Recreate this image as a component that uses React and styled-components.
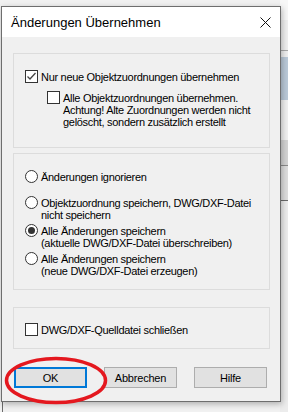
import React from 'react'
import styled, { createGlobalStyle } from 'styled-components'

const GlobalStyle = createGlobalStyle`
html, body {
  margin: 0;
  padding: 0;
}
body {
  width: 288px;
  height: 412px;
  overflow: hidden;
  font-family: "Liberation Sans", Arial, sans-serif;
}
`

const Page = styled.div`
position: relative;
width: 288px;
height: 412px;
overflow: hidden;
padding: 6px 0 0 1px;
box-sizing: border-box;
background:
  linear-gradient(to bottom,
    #f7f7f7 0, #f7f7f7 20px,
    #efefef 20px, #efefef 50px,
    #a8a8a8 50px, #a8a8a8 51px,
    #eeeeee 51px, #eeeeee 57px,
    #b9c8d7 57px, #b9c8d7 100px,
    #f0f0f0 100px, #f0f0f0 140px,
    #d3d3d3 140px, #d3d3d3 165px,
    #8a8a8a 165px, #8a8a8a 166px,
    #dddddd 166px, #dddddd 200px,
    #6a6a6a 200px, #6a6a6a 201px,
    #ececec 201px) right top / 8px 100% no-repeat,
  linear-gradient(to right, transparent 2px, #6b6b6b 2px, #6b6b6b 3px, transparent 3px) left bottom / 10px 12px no-repeat,
  #f1f1f1;
`

const Dialog = styled.div`
width: 280px;
height: 396px;
box-sizing: border-box;
border: 1px solid #6e6e6e;
background: #f0f0f0;
display: flex;
flex-direction: column;
box-shadow: 1px 2px 6px rgba(0, 0, 0, 0.28);
`

const TitleBar = styled.div`
height: 30px;
background: #ffffff;
display: flex;
align-items: center;
justify-content: space-between;
padding: 0 9px 0 9px;
flex: none;
`

const Title = styled.span`
font-family: "Liberation Sans", Arial, sans-serif;
font-size: 13px;
color: #000;
`

const Close = styled.svg`
width: 11px;
height: 11px;
margin-top: 1px;
`

const Body = styled.div`
padding: 16px 10px 0 11px;
display: flex;
flex-direction: column;
`

const Group = styled.div`
border: 1px solid #dcdcdc;
box-sizing: border-box;
height: ${p => p.$h}px;
margin-top: ${p => p.$mt || 0}px;
padding: ${p => p.$pt}px 0 0 11px;
display: flex;
flex-direction: column;
`

const Row = styled.label`
display: flex;
align-items: flex-start;
gap: 3px;
margin-top: ${p => p.$mt || 0}px;
margin-left: ${p => p.$indent || 0}px;
font-size: 11px;
line-height: 12px;
letter-spacing: -0.3px;
color: #000;
`

const Text = styled.span`
padding-top: 1px;
`

const Box = styled.span`
flex: none;
width: 13px;
height: 13px;
box-sizing: border-box;
border: 1px solid #333333;
background: #ffffff;
display: flex;
align-items: center;
justify-content: center;
`

const Circle = styled.span`
flex: none;
width: 13px;
height: 13px;
box-sizing: border-box;
border: 1px solid #333333;
border-radius: 50%;
background: #ffffff;
display: flex;
align-items: center;
justify-content: center;
&::after {
  content: "";
  display: ${p => (p.$on ? 'block' : 'none')};
  width: 7px;
  height: 7px;
  border-radius: 50%;
  background: #333333;
}
`

const Buttons = styled.div`
display: flex;
gap: 17px;
margin-top: 18px;
padding-left: 1px;
`

const Button = styled.button`
width: 73px;
height: 21px;
box-sizing: border-box;
padding: 0;
margin: 0;
background: #e1e1e1;
border: ${p => (p.$focus ? '2px solid #0078d7' : '1px solid #adadad')};
font-family: "Liberation Sans", Arial, sans-serif;
font-size: 11px;
letter-spacing: -0.2px;
color: #000;
`

const Ring = styled.svg`
position: absolute;
left: 4px;
top: 356px;
width: 104px;
height: 49px;
pointer-events: none;
`

const Check = ({ checked }) => (
  <Box>
    {checked && (
      <svg width="11" height="11" viewBox="0 0 11 11">
        <polyline points="1.5,5.5 4,8 9.5,2" fill="none" stroke="#444" strokeWidth="1.3" />
      </svg>
    )}
  </Box>
)

const Option = ({ radio, on, mt, indent, children }) => (
  <Row $mt={mt} $indent={indent}>
    {radio ? <Circle $on={on} /> : <Check checked={on} />}
    <Text>{children}</Text>
  </Row>
)

export default function App() {
  return (
    <>
      <GlobalStyle />
      <Page>
        <Dialog>
          <TitleBar>
            <Title>Änderungen Übernehmen</Title>
            <Close viewBox="0 0 11 11">
              <path d="M0.5 0.5 L10.5 10.5 M10.5 0.5 L0.5 10.5" stroke="#111" strokeWidth="1" fill="none" />
            </Close>
          </TitleBar>
          <Body>
            <Group $h={95} $pt={16}>
              <Option on>Nur neue Objektzuordnungen übernehmen</Option>
              <Option mt={8} indent={22}>
                Alle Objektzuordnungen übernehmen.<br />
                Achtung! Alte Zuordnungen werden nicht<br />
                gelöscht, sondern zusätzlich erstellt
              </Option>
            </Group>
            <Group $h={137} $mt={5} $pt={16}>
              <Option radio>Änderungen ignorieren</Option>
              <Option radio mt={13}>
                Objektzuordnung speichern, DWG/DXF-Datei<br />
                nicht speichern
              </Option>
              <Option radio on mt={3}>
                Alle Änderungen speichern<br />
                (aktuelle DWG/DXF-Datei überschreiben)
              </Option>
              <Option radio mt={3}>
                Alle Änderungen speichern<br />
                (neue DWG/DXF-Datei erzeugen)
              </Option>
            </Group>
            <Group $h={42} $mt={17} $pt={15}>
              <Option>DWG/DXF-Quelldatei schließen</Option>
            </Group>
            <Buttons>
              <Button $focus>OK</Button>
              <Button>Abbrechen</Button>
              <Button>Hilfe</Button>
            </Buttons>
          </Body>
        </Dialog>
        <Ring viewBox="0 0 104 49">
          <ellipse cx="52" cy="24.5" rx="49.5" ry="22" fill="none" stroke="#e4181f" strokeWidth="3.5" />
        </Ring>
      </Page>
    </>
  )
}
